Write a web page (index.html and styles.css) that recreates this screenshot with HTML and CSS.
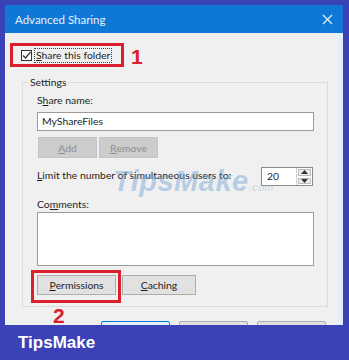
FILE: index.html
```html
<!DOCTYPE html>
<html>
<head>
<meta charset="utf-8">
<link rel="stylesheet" href="styles.css">
</head>
<body>
<div class="dialog">
  <div class="titlebar">
    <span class="title">Advanced Sharing</span>
    <svg class="close" width="11" height="11" viewBox="0 0 11 11"><path d="M1 1 L10 10 M10 1 L1 10" stroke="#dbe9f8" stroke-width="1.4" fill="none"/></svg>
  </div>
  <div class="content">
    <div class="share-row">
      <div class="redbox redbox-1">
        <span class="checkbox"><svg width="11" height="11" viewBox="0 0 11 11"><path d="M2 5.5 L4.5 8 L9.5 2" stroke="#333" stroke-width="1.2" fill="none"/></svg></span>
        <span class="focus-label"><u>S</u>hare this folder</span>
      </div>
      <span class="num num-1">1</span>
    </div>
    <fieldset class="group">
      <legend>Settings</legend>
      <div class="label">S<u>h</u>are name:</div>
      <div class="textbox">MyShareFiles</div>
      <div class="btn-row">
        <span class="btn disabled"><u>A</u>dd</span>
        <span class="btn disabled"><u>R</u>emove</span>
      </div>
      <div class="limit-row">
        <span class="limit-text"><u>L</u>imit the number of simultaneous users to:</span>
        <div class="spin">
          <span class="spin-value">20</span>
          <span class="spin-arrows">
            <span class="arrow"><svg width="7" height="4" viewBox="0 0 7 4"><path d="M0 4 L3.5 0 L7 4 Z" fill="#333"/></svg></span>
            <span class="arrow"><svg width="7" height="4" viewBox="0 0 7 4"><path d="M0 0 L3.5 4 L7 0 Z" fill="#333"/></svg></span>
          </span>
        </div>
      </div>
      <div class="label comments">Co<u>m</u>ments:</div>
      <div class="textarea"></div>
      <div class="perm-row">
        <div class="redbox redbox-2">
          <span class="btn perm"><u>P</u>ermissions</span>
          <span class="num num-2">2</span>
        </div>
        <span class="btn caching"><u>C</u>aching</span>
      </div>
    </fieldset>
    <div class="bottom-row">
      <span class="btn bottom default"></span>
      <span class="btn bottom"></span>
      <span class="btn bottom"></span>
    </div>
  </div>
  <div class="watermark">TipsMake<span class="wm-com">.com</span></div>
</div>
<div class="footer">TipsMake</div>
</body>
</html>
```

FILE: styles.css
```css
html, body {
  margin: 0;
  padding: 0;
}
body {
  width: 349px;
  height: 360px;
  overflow: hidden;
  background: #3a42b6;
  font-family: Lato, "Liberation Sans", Arial, sans-serif;
  font-size: 10.4px;
  color: #1e1e1e;
}
.dialog {
  position: relative;
  margin: 5px 0 0 5px;
  width: 338px;
  height: 320px;
  overflow: hidden;
  background: #f0f0f0;
  display: flex;
  flex-direction: column;
}
.titlebar {
  height: 28px;
  flex: none;
  background: #0f77d5;
  display: flex;
  align-items: center;
  justify-content: space-between;
  padding: 0 10px 0 10px;
  color: #e8f1fb;
  font-size: 11.5px;
}
.close {
  display: block;
}
.content {
  flex: 1;
  padding: 10px 0 0 5px;
  border-right: 5px solid #e2eef9;
}
.share-row {
  display: flex;
  align-items: center;
}
.redbox {
  border: 3px solid #d9202c;
  box-sizing: border-box;
}
.redbox-1 {
  width: 114px;
  height: 24px;
  padding-left: 8px;
  display: flex;
  align-items: center;
}
.checkbox {
  width: 11px;
  height: 11px;
  border: 1px solid #333;
  background: #fff;
  box-sizing: border-box;
  display: flex;
  flex: none;
}
.checkbox svg {
  margin: -1px;
}
.focus-label {
  margin-left: 2px;
  border: 1px dotted #444;
  padding: 0 1px;
  line-height: 13px;
  white-space: nowrap;
}
.num {
  color: #d9202c;
  font-family: "Liberation Sans", Arial, sans-serif;
  font-weight: bold;
  font-size: 21px;
  line-height: 16px;
}
.num-1 {
  margin-left: 7px;
  margin-top: 4px;
}
.group {
  margin: 8px 0 0 12px;
  width: 306px;
  box-sizing: border-box;
  border: 1px solid #dcdcdc;
  padding: 4px 13px 3px 14px;
}
.group legend {
  padding: 0 2px;
  margin-left: -9px;
  line-height: 14px;
}
.label {
  line-height: 14px;
}
.textbox {
  margin-top: 5px;
  height: 19px;
  box-sizing: border-box;
  border: 1px solid #9b9b9b;
  background: #fff;
  padding-left: 4px;
  line-height: 17px;
}
.btn-row {
  margin-top: 6px;
  display: flex;
  gap: 2px;
  padding-left: 1px;
}
.btn {
  box-sizing: border-box;
  display: flex;
  align-items: center;
  justify-content: center;
  border: 1px solid #adadad;
  background: #e1e1e1;
  flex: none;
}
.btn.disabled {
  width: 59px;
  height: 21px;
  background: #cccccc;
  border-color: #c4c4c4;
  color: #8d8d8d;
}
.limit-row {
  margin-top: 9px;
  display: flex;
  align-items: center;
  justify-content: space-between;
  padding-right: 1px;
}
.limit-text {
  white-space: nowrap;
  margin-top: -3px;
}
.spin {
  width: 52px;
  height: 19px;
  flex: none;
  box-sizing: border-box;
  border: 1px solid #8a8a8a;
  background: #fff;
  display: flex;
}
.spin-value {
  flex: 1;
  padding-left: 5px;
  line-height: 17px;
}
.spin-arrows {
  width: 15px;
  display: flex;
  flex-direction: column;
  border-left: 1px solid #d0d0d0;
}
.arrow {
  flex: 1;
  display: flex;
  align-items: center;
  justify-content: center;
  background: #ececec;
  border: 1px solid #bdbdbd;
  margin: 1px;
}
.comments {
  margin-top: 12px;
  line-height: 13px;
}
.textarea {
  margin-top: 1px;
  height: 54px;
  box-sizing: border-box;
  border: 1px solid #9b9b9b;
  background: #fff;
}
.perm-row {
  margin-top: 4px;
  display: flex;
  align-items: flex-start;
}
.redbox-2 {
  position: relative;
  margin-left: -6px;
  padding: 2px 2px 5px 3px;
}
.btn.perm {
  width: 79px;
  height: 20px;
}
.num-2 {
  position: absolute;
  left: 19px;
  top: 35px;
}
.btn.caching {
  margin-top: 5px;
  margin-left: 1px;
  width: 74px;
  height: 20px;
}
.bottom-row {
  margin-top: 14px;
  display: flex;
  gap: 9px;
  padding-left: 91px;
}
.btn.bottom {
  width: 69px;
  height: 22px;
  border-radius: 2px;
}
.btn.bottom.default {
  border-color: #0078d7;
  background: #e5f1fb;
}
.watermark {
  position: absolute;
  left: 108px;
  top: 160px;
  font-family: "Liberation Sans", Arial, sans-serif;
  font-size: 29px;
  font-weight: bold;
  font-style: italic;
  color: rgba(110, 160, 215, 0.45);
  letter-spacing: 0.5px;
  pointer-events: none;
}
.wm-com {
  font-size: 10px;
  color: rgba(150, 180, 215, 0.35);
}
.footer {
  height: 35px;
  display: flex;
  align-items: center;
  padding-left: 18px;
  color: #ffffff;
  font-family: "Liberation Sans", Arial, sans-serif;
  font-weight: bold;
  font-size: 17px;
}
```
